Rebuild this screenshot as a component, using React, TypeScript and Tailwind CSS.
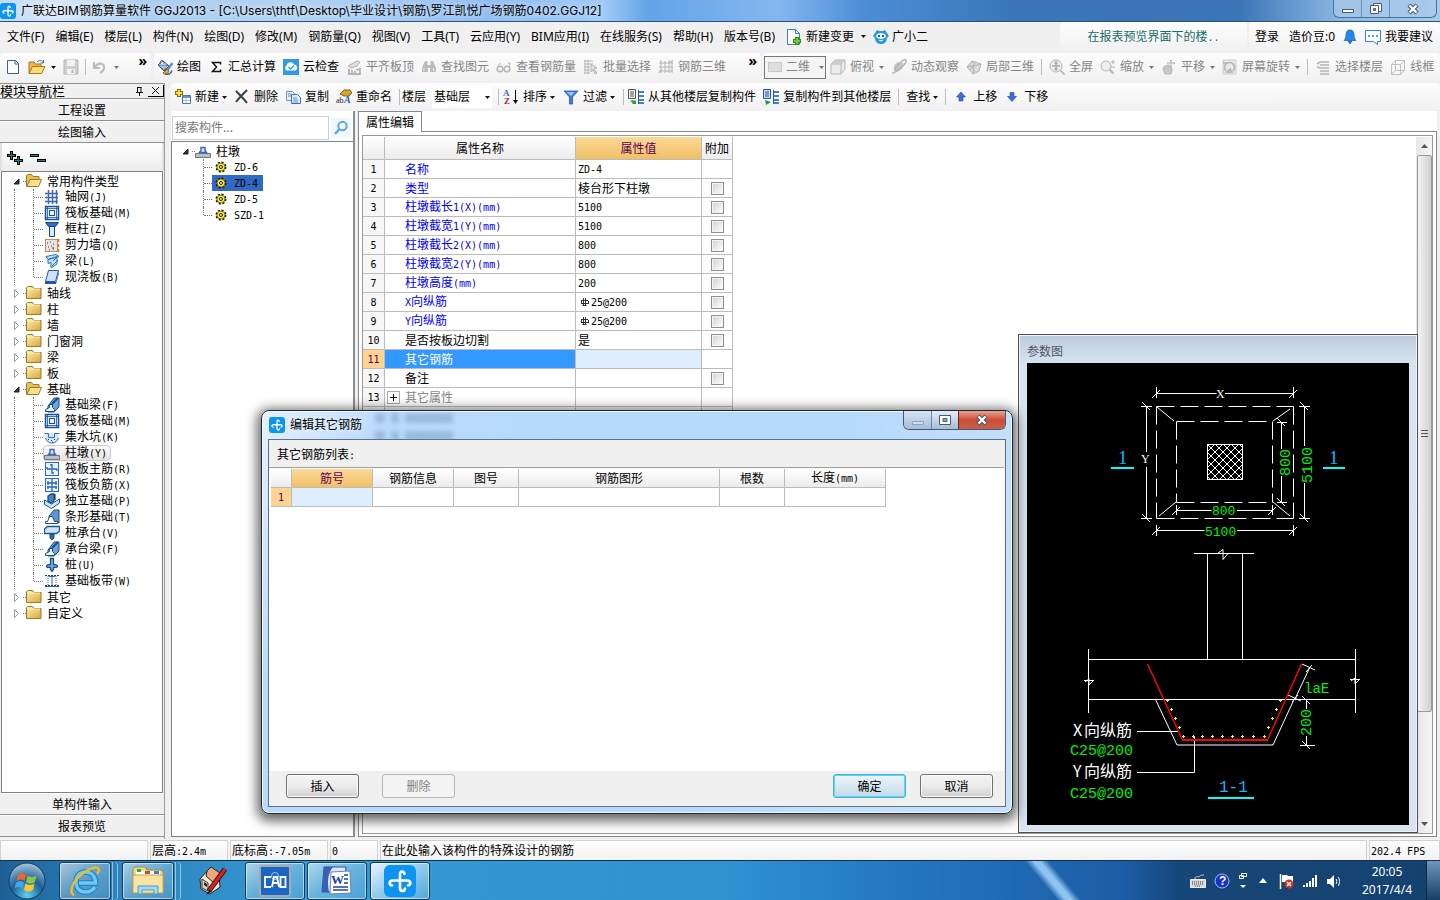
import React, { useState } from "react";

const UI = "[font-family:'Noto_Sans','Noto_Sans_CJK_SC',sans-serif] text-[12px] leading-4";
const SONG = "[font-family:'Noto_Sans_CJK_SC',sans-serif] text-[12px] leading-4";

/* Han characters at 12px with half-width Latin beside them */
function Mix({ children }: { children: string }) {
  return (
    <span className="whitespace-pre">
      {children.split(/([\x20-\x7e]+)/).map((part, i) =>
        i % 2 ? (
          <span key={i} className="text-[10px] [font-family:'DejaVu_Sans_Mono',monospace]">
            {part}
          </span>
        ) : (
          part
        ),
      )}
    </span>
  );
}

function Ico({ children, w = 16, h = 16, vb }: { children: React.ReactNode; w?: number; h?: number; vb?: string }) {
  return (
    <svg width={w} height={h} viewBox={vb ?? `0 0 ${w} ${h}`} fill="none" className="shrink-0" aria-hidden="true">
      {children}
    </svg>
  );
}

function Caret({ color = "#111" }: { color?: string }) {
  return (
    <Ico w={5} h={3}>
      <path d="M0 0h5L2.5 3z" fill={color} />
    </Ico>
  );
}

function Logo({ size }: { size: number }) {
  return (
    <Ico w={size} h={size} vb="0 0 32 32">
      <rect width="32" height="32" rx="6" fill="#0c94f0" />
      <path d="M20.500 9c-.5-3.500-4.500-3.500-4.500.500v13.500c0 4 4.500 4 5 .500M8 20.500c-3.500-1-3-5 1-5h14c4 0 4.500 4 1 5" stroke="#fff" strokeWidth="2.600" strokeLinecap="round" />
    </Ico>
  );
}

const G = "#b4b4b4";

const icons: Record<string, React.ReactNode> = {
  newfile: <Ico><path d="M2.500 1.500h8l3 3v10h-11z" fill="#fff" stroke="#3a5f96" /><path d="M10 1.500v3.500h3.500" stroke="#3a5f96" /></Ico>,
  open: <Ico w={18}><path d="M1 14V3h5l1.500 2H13v3" fill="#e9b74d" stroke="#a97916" /><path d="M1 14.500 4.500 7.500H17l-3.500 7z" fill="#ffdb7a" stroke="#a97916" /><path d="M9 3c2-2.500 5-2 6 .500M15.500 1v3h-3" stroke="#3f74ad" /></Ico>,
  save: <Ico><path d="M1 1h14v14H1z" fill="#cfcfcf" stroke="#b5b5b5" /><path d="M4 1h8v6H4zM4 10h8v5H4z" fill="#f2f2f2" /><path d="M9.500 11v3" stroke="#b5b5b5" strokeWidth="2" /></Ico>,
  undo: <Ico><path d="M2 3v6h6M3 8c3-5 10-4 9 1 0 2-2 4-4 5" stroke="#bcbcbc" strokeWidth="2.200" /></Ico>,
  draw: <Ico><path d="m1 6 5-4 6 5-5 5z" fill="#fff" stroke="#33507c" /><path d="M3 5c0-5 4-5 4 0" stroke="#33507c" /><path d="M1 6h10l-4 5z" fill="#a9c7ee" stroke="#33507c" strokeWidth=".7" /><path d="m15.500 4-5 7" stroke="#5b8bd6" strokeWidth="2.400" /><path d="m10 10-4 4c2 2 5 1 6-2z" fill="#e5a823" stroke="#8b6310" /><path d="M8 15.500c3 .5 6-1 7-4" stroke="#2a66cc" strokeWidth="1.600" /></Ico>,
  sigma: <Ico><path d="M12.500 5.500v-2h-8L8.500 8l-4 4.500h8v-2" stroke="#111" strokeWidth="1.500" /></Ico>,
  cloud: <Ico><rect width="16" height="16" fill="#2f9be6" /><path d="M3.500 11.500a3 3 0 0 1 0-5 4 4 0 0 1 7.500-1 3.200 3.200 0 0 1 1.500 6z" fill="#fff" /><path d="m5.500 8 2 2 3.500-3.500" stroke="#2f9be6" strokeWidth="1.400" /></Ico>,
  align: <Ico><path d="m2 7 9-5 3 1-3 4-6 2z" fill="#ddd" stroke={G} /><path d="M3 15v-5M6 15v-4M9 15v-3M2 15h12v-5l-4 1" stroke={G} strokeWidth="1.800" /></Ico>,
  find: <Ico><path d="M4 2h2.500v3L7 13H1V9l2-5zM9.500 2H12l1 2 2 5v4H9l.5-8zM6 6h4v3H6z" fill="#bcbcbc" /><path d="M3 9v3M12.500 9v3" stroke="#eee" /></Ico>,
  glasses: <Ico><circle cx="4" cy="10" r="2.800" stroke={G} strokeWidth="1.500" /><circle cx="11" cy="10" r="2.800" stroke={G} strokeWidth="1.500" /><path d="M1.500 9 4 4M13 8l1-4h-2" stroke={G} /></Ico>,
  batch: <Ico><path d="M1 2h9M1 5h9M1 8h6M1 11h6M1 14h6M2 1v14M5 1v14" stroke={G} /><path d="m8 5 6 4-3 1 3 4-2 1-2-4-2 2z" fill="#ddd" stroke={G} /></Ico>,
  steel3d: <Ico><path d="M1 4h14M1 12h14M1 8h14M3 1v13M7 2v12M11 1v13M14 2v12M1 14l3-4M11 4l4-3" stroke={G} /></Ico>,
  flat: <Ico w={14} h={12}><rect x=".5" y="1.500" width="13" height="9" fill="#dedede" stroke="#c8c8c8" /></Ico>,
  cube: <Ico><path d="m1 5 4-4h10v9l-4 5H1z" fill="#ececec" stroke={G} /><path d="M1 5h10v10M11 5l4-4" stroke={G} /><path d="M5 1h10l-4 4H1z" fill="#ccc" /></Ico>,
  orbit: <Ico><path d="M3 10C2 5 7 2 12 4c1 5-3 9-7 8z" fill="#c4c4c4" /><path d="M1 14c2 1 14-8 14-12s-6 1-9 5-3 6 1 5" stroke={G} strokeWidth="1.500" /></Ico>,
  local3d: <Ico><path d="m1 8 5-6 9 3-2 7-6 3z" fill="#ddd" stroke={G} /><path d="m6 2 2 5 7-2M8 7l-1 8M3.500 5l6 8M10 3l-6 8M1 8l7-1" stroke={G} /></Ico>,
  full: <Ico><circle cx="7" cy="7" r="6" fill="#eee" stroke={G} /><path d="M7 3v8M3 7h8M5.500 4.500 7 3l1.500 1.500M5.500 9.500 7 11l1.500-1.500M11.500 11.500l4 4" stroke="#a8a8a8" strokeWidth="1.300" /></Ico>,
  zoom: <Ico><circle cx="6" cy="7" r="5" fill="#eee" stroke={G} /><path d="m9.500 10.500 4 4" stroke={G} strokeWidth="2" /><path d="M11 3h4M13 1v4M11 8h4" stroke={G} /></Ico>,
  pan: <Ico><path d="M2 10c0-3 3-3 5-4 2 0 4 2 4 5l-1 4H4z" fill="#c8c8c8" stroke={G} /><path d="M10 1v8M6 4h8M9 2l1-1 1 1M13 3l1 1-1 1" stroke={G} /></Ico>,
  rotate: <Ico><path d="M1 1h13v14H1z" fill="#e8e8e8" stroke="#ccc" /><path d="M4 12a5 5 0 1 1 7 0M8 10l-3 3h5zM1 4h5" stroke={G} strokeWidth="1.600" /></Ico>,
  floors: <Ico><path d="M5 3h9M5 6h9M5 9h9M5 12h9M5 15h9M2 5l3-2M2 8l3 1" stroke={G} strokeWidth="1.600" /></Ico>,
  wire: <Ico><path d="M1.500 5.500h9v10h-9zM5.500 1.500h9v10h-9zM1.500 5.500l4-4M10.500 5.500l4-4M1.500 15.500l4-4M10.500 15.500l4-4" stroke="#c2c2c2" /></Ico>,
  create: <Ico><path d="M4 0v8M0 4h8" stroke="#8a6a00" strokeWidth="4" /><path d="M4 1v6M1 4h6" stroke="#ffe14a" strokeWidth="2" /><path d="M7.500 6.500h8v8h-8z" fill="#fff" stroke="#5275ad" /><path d="M8 7h7v2H8z" fill="#6d95d9" /><path d="M8 11.500h7M11 9v5" stroke="#a9bfe2" /></Ico>,
  remove: <Ico><path d="M2 2c4 4 8 8 11 12M13 1C9 5 6 8 2 13" stroke="#3d3d3d" strokeWidth="2" /></Ico>,
  copy: <Ico><path d="M1.500 2.500h6l2 2v7h-8z" fill="#e3edfb" stroke="#6b93cd" /><path d="M6.500 5.500h6l3 3v6h-9z" fill="#dfeafa" stroke="#426fb5" /><path d="M3 5h3M3 7h3M8 9h4M8 11h5M8 13h5" stroke="#6b93cd" /></Ico>,
  rename: <Ico><path d="m4 5 4-4h6l2 3-3 3H8z" fill="#d7a436" stroke="#8b6310" /><text x="0" y="14" fontSize="8" fontFamily="Liberation Serif, serif" fill="#222">ab</text><text x="8" y="14" fontSize="10" fontWeight="700" fontStyle="italic" fontFamily="Liberation Serif, serif" fill="#2c60c4">A</text></Ico>,
  sort: <Ico><text x="0" y="7" fontSize="9" fontWeight="700" fontFamily="Liberation Serif, serif" fill="#3c66b5">A</text><text x="1" y="15" fontSize="9" fontWeight="700" fontFamily="Liberation Serif, serif" fill="#a03030">Z</text><path d="M12.500 1v13" stroke="#111" /><path d="M10 11h5l-2.500 4z" fill="#111" /></Ico>,
  filter: <Ico><path d="M1 2h14L9.500 8v7h-3V8z" fill="#3f7de0" stroke="#2458b0" strokeWidth=".8" /><path d="M3.500 3h8L8 7z" fill="#9cc4ff" /></Ico>,
  fromFloor: <Ico><path d="M.5.500h7v9h-7z" fill="#f2f2f2" stroke="#555" /><path d="M2 3h4M2 5h4M2 7h4" stroke="#555" /><path d="M10 2h6v2h-6zM10 6h6v2h-6zM10 10h6v2h-6zM10 13h6v2h-6z" fill="#4c7fbd" /><path d="M10.500 1v14" stroke="#2c5a94" /><path d="M2 12c2-1 4-1 5 0l1-1v4H4l1-1z" fill="#1e9c40" /></Ico>,
  toFloor: <Ico><path d="M.5.500h7v9h-7z" fill="#c6dbff" stroke="#2c5a94" /><path d="M2 3h4M2 5h4M2 7h4" stroke="#2c5a94" /><path d="M10 2h6v2h-6zM10 6h6v2h-6zM10 10h6v2h-6zM10 13h6v2h-6z" fill="#4c7fbd" /><path d="M10.500 1v14" stroke="#2c5a94" /><path d="M2 11l6 2-5 3z" fill="#1e9c40" /></Ico>,
  up: <Ico w={10} h={10}><path d="M5 0 .5 5H3v4h4V5h2.500z" fill="#3b6fdc" stroke="#234a9e" strokeWidth=".6" /></Ico>,
  down: <Ico w={10} h={10}><path d="M5 9.500.5 4.500H3v-4h4v4h2.500z" fill="#3b6fdc" stroke="#234a9e" strokeWidth=".6" /></Ico>,
};

const treeIcons: Record<string, React.ReactNode> = {
  gridnet: <Ico><path d="M1 4.500h13M1 8.500h13M1 12.500h13M4.500 1v14M8.500 1v14M12.500 1v14" stroke="#3e66b4" strokeWidth="1.500" /></Ico>,
  raft: <Ico><rect x="1.500" y="1.500" width="13" height="13" fill="#e7f2ff" stroke="#17529a" strokeWidth="1.500" /><rect x="5.500" y="5.500" width="5" height="5" stroke="#17529a" /><path d="M3.500 1v14M12.500 1v14M1 3.500h14M1 12.500h14" stroke="#17529a" strokeWidth=".8" /></Ico>,
  column: <Ico><path d="M1.500 1.500h13l-3 4h-7z" fill="#2f6fc2" stroke="#15438a" /><path d="M5.500 5.500h5v10h-5z" fill="#d9ebff" stroke="#15438a" /></Ico>,
  wall: <Ico><rect x="1.500" y="2.500" width="12" height="12" fill="#e9e4e0" stroke="#c4895c" /><path d="M3 6h1M6 5h1M9 7h1M4 10h1M7 9h1M5 13h1M9 12h1M8 11h2" stroke="#444" /><path d="M14.500 2v3M14.500 7v3M14.500 12v3" stroke="#e07020" strokeWidth="1.500" /></Ico>,
  beam: <Ico><path d="M2 3.500 12 1.500l3 2-11 3zM4 6.500v4l3-1v5.500l6-4V3.500z" fill="#bfe0fb" stroke="#2a75b8" /><path d="m9 8 4-4M8 13l6-6" stroke="#2a75b8" /></Ico>,
  slab: <Ico><path d="M4.500 1.500h10l-3 11h-10z" fill="#cfe2fb" stroke="#2356a5" /><path d="M1 13h11l3-11v2.500L12 15H1z" fill="#2356a5" /></Ico>,
  fbeam: <Ico><path d="M4 15V9l6-8h5v9l-5 5z" fill="#6fa4d8" stroke="#1c4c86" /><path d="M1.500 14.500v-2l4-2V7.500h3v3l2 2v2z" fill="#e9f4ff" stroke="#1c4c86" /><path d="m8 7 6-6" stroke="#1c4c86" strokeWidth="2" /></Ico>,
  pit: <Ico><path d="M1.500 4v5c1 3 3 5 6.500 5s5.500-2 6.500-5V4" fill="#d5e8fb" /><path d="M.5 4.500h4v4h6v-4h5M1.500 9c1 3 3 5 6.500 5s5.500-2 6.500-5" stroke="#2f6fb8" /><path d="M4 10.500h1M7 11.500h1M10 10.500h1M8 13h1" stroke="#174a8a" /></Ico>,
  pier: <Ico><path d="M.5 10.500h15v4H.500z" fill="#b9bfc3" stroke="#70777c" /><path d="M4.500 9.500 6 7.500v-3h4v3l1.500 2z" fill="#d4e4fb" stroke="#3f62c0" strokeWidth="1.400" /></Ico>,
  mainbar: <Ico><rect x="1.500" y="1.500" width="13" height="13" fill="#eaf3ff" stroke="#2966be" /><path d="M8 3v10M3 8h10M6 4h2M8 12h2M3 8v-2M13 8v2" stroke="#2966be" strokeWidth="1.300" /></Ico>,
  negbar: <Ico><rect x="1.500" y="1.500" width="13" height="13" fill="#eaf3ff" stroke="#2966be" /><path d="M8 1v14M3 6h10M3 10h10M4 4v4M12 4v4M4 9v3M12 9v3" stroke="#2966be" strokeWidth="1.300" /></Ico>,
  isolated: <Ico><path d="m.5 7 7 4 8-5v4l-8 5.500-7-4z" fill="#cfe3fa" stroke="#1c4c86" /><path d="M4 8V3l3-2h3v7l-3 2zM11 7V1" fill="#4a84c4" stroke="#1c4c86" strokeWidth="1.300" /></Ico>,
  strip: <Ico><path d="M5 11V7l5-6h5v13z" fill="#5f96cf" stroke="#1c4c86" /><path d="M1.500 14.500v-2h2l2-5h3l2 5h3v2z" fill="#fff" stroke="#1c4c86" /></Ico>,
  pilecap: <Ico><path d="m.5 4 3-2.500h12V6l-3 2.500H.5z" fill="#cfe3fa" stroke="#1c5a96" strokeWidth="1.300" /><path d="M6 9v4l2 2 2-2V9z" fill="#2c6cb0" stroke="#1c4c86" /></Ico>,
  pile: <Ico><path d="M6.500 1.500h3v6c3 0 4 1 4 2s-2 1-4 1v2l-1.500 2-1.500-2v-2c-2 0-4 0-4-1s1-2 4-2z" fill="#7fb0e0" stroke="#17508e" strokeWidth="1.300" /></Ico>,
  band: <Ico><path d="M1 2.500h14M1 12.500h14" stroke="#333" strokeDasharray="2 1" /><path d="M4 3v9M12 3v9" stroke="#2966be" strokeDasharray="1 1" /><path d="M8 3v9M1 13.500h14M5 3.500h6" stroke="#2966be" /></Ico>,
};

const FolderClosed = () => (
  <Ico>
    <path d="M.5 13.500v-11l1-1h5l1.500 2h7v10z" fill="url(#fold)" stroke="#9b7a2a" />
    <path d="M1 4h13" stroke="#fff2b8" />
  </Ico>
);
const FolderOpen = () => (
  <Ico>
    <path d="M.5 13.500v-11l1-1h4l1.500 2h6v3" fill="#e8c052" stroke="#9b7a2a" />
    <path d="m1 13.500 3-7h11.500l-3 7z" fill="#ffe08a" stroke="#9b7a2a" />
  </Ico>
);

function Tool({ icon, label, caret, disabled }: { icon?: string; label: string; caret?: boolean; disabled?: boolean }) {
  return (
    <button className={`flex shrink-0 items-center whitespace-nowrap ${disabled ? "text-[#868686]" : "text-black"}`}>
      {icon && <span className="mr-1 flex w-4 justify-center">{icons[icon]}</span>}
      {label}
      {caret && <span className={disabled ? "ml-[5px]" : "ml-[3px]"}><Caret color={disabled ? "#777" : "#111"} /></span>}
    </button>
  );
}

const Sep = () => <i className="h-4 w-px shrink-0 bg-[#bdbdbd]" />;
const More = () => <b className="mr-1 mb-3 ml-auto text-[14px] leading-4">»</b>;
const strip = "bg-linear-to-b from-[#fdfdfd] to-[#f1f1f1] rounded-sm";

const menus = ["文件(F)", "编辑(E)", "楼层(L)", "构件(N)", "绘图(D)", "修改(M)", "钢筋量(Q)", "视图(V)", "工具(T)", "云应用(Y)", "BIM应用(I)", "在线服务(S)", "帮助(H)", "版本号(B)"];

function TitleBar() {
  return (
    <header className="flex h-[22px] shrink-0 items-center border-b border-[#27527f] bg-[linear-gradient(90deg,#c3daf2_0%,#d8e8f8_4%,#a9ccef_10%,#b4d3f2_20%,#8fbdf0_34%,#a0caf6_42%,#64a3e8_45%,#84b7ef_54%,#4c8dd6_60%,#3b77b8_70%,#3a75b6_86%,#8ab6e2_93%,#a7caea_100%)]">
      <Logo size={16} />
      <h1 className="ml-[5px] whitespace-nowrap text-black [font-family:'Inter','Noto_Sans_CJK_SC',sans-serif] [text-shadow:0_0_6px_#fff]">
        广联达BIM钢筋算量软件 GGJ2013 - [C:\Users\thtf\Desktop\毕业设计\钢筋\罗江凯悦广场钢筋0402.GGJ12]
      </h1>
      <div className="mr-[3px] ml-auto flex h-[18px] self-start overflow-hidden rounded-b-md border border-t-0 border-[#4d7298] bg-[#a9c9e8]/70">
        <button aria-label="最小化" className="flex w-7 items-center justify-center border-r border-[#6b8fb4]"><Ico><path d="M2.500 8.500h11v3h-11z" fill="#fff" stroke="#4a5a6c" /></Ico></button>
        <button aria-label="还原" className="flex w-7 items-center justify-center border-r border-[#6b8fb4]"><Ico><path d="M5.500 2.500h8v8h-8z" fill="#fff" stroke="#4a5a6c" /><path d="M2.500 4.500h8v8h-8z" fill="#fff" stroke="#4a5a6c" /><path d="M5.500 7.500h2v2h-2z" fill="#8bb" stroke="#4a5a6c" /></Ico></button>
        <button aria-label="关闭" className="flex w-[46px] items-center justify-center"><CloseX /></button>
      </div>
    </header>
  );
}

const CloseX = () => (
  <Ico w={14} h={12}>
    <path d="m3 2 8 8M11 2l-8 8" stroke="#4a5a6c" strokeWidth="4.500" />
    <path d="m3.500 2.500 7 7M10.500 2.500l-7 7" stroke="#fff" strokeWidth="2.400" />
  </Ico>
);

function MenuBar() {
  return (
    <nav className="flex h-[31px] shrink-0 items-stretch bg-[#f0f0f0] pb-0.5">
      <div className="flex items-center gap-[11px] pl-[7px]">
        {menus.map((m) => <button key={m} className="whitespace-nowrap">{m}</button>)}
        <button className="flex items-center gap-1 whitespace-nowrap">
          <Ico><path d="M1.500.500h8l4 4v11h-12z" fill="#fff" stroke="#3a82c8" /><path d="M9.500.500v4h4" stroke="#3a82c8" /><path d="M11 8v8M7 12h8" stroke="#2f8f12" strokeWidth="4" /><path d="M11 9v6M8 12h6" stroke="#73cc3c" strokeWidth="2" /></Ico>
          新建变更<span className="ml-[3px]"><Caret /></span>
        </button>
        <button className="-ml-1 flex items-center gap-[3px] whitespace-nowrap">
          <Ico><path d="M2 4 4 1l2 1h4l2-1 2 3 2 3-2 2c0 4-3 6-6 6s-6-2-6-6L0 7z" fill="#2a96dc" /><ellipse cx="8" cy="7" rx="5" ry="3" fill="#e8f6ff" /><circle cx="6" cy="7" r="1" fill="#123" /><circle cx="10" cy="7" r="1" fill="#123" /><path d="M6 11c1 1 3 1 4 0" stroke="#fff" /></Ico>
          广小二
        </button>
      </div>
      <a href="#news" className={`mr-0.5 ml-auto flex w-[187px] items-center justify-center text-[#186c6c] ${strip} ${SONG}`}><Mix>在报表预览界面下的楼..</Mix></a>
      <div className={`flex w-[191px] items-center pl-1.5 whitespace-nowrap ${strip}`}>
        <button>登录</button>
        <button className="ml-2.5">造价豆:0</button>
        <button aria-label="通知" className="mr-2 ml-2"><Ico w={14}><path d="M7 1c-3 0-4 2-4 5 0 3-1 4-2 5.500h12C12 10 11 9 11 6c0-3-1-5-4-5zM5 12h4l-2 3z" fill="#2186ee" stroke="#1b5fae" strokeWidth=".7" /></Ico></button>
        <button className="flex items-center gap-1"><Ico><path d="M.5 1.500h15v11h-3v3l-4-3h-8z" fill="#fff" stroke="#2a86d8" /><path d="M3 7h2M7 7h2M11 7h2" stroke="#2a86d8" strokeWidth="1.400" /></Ico>我要建议</button>
      </div>
    </nav>
  );
}

function ToolBar() {
  return (
    <div className="flex h-[30px] shrink-0 bg-[#f0f0f0] pb-0.5">
      <div className={`flex w-[151px] items-center pl-[5px] ${strip}`}>
        <button aria-label="新建">{icons.newfile}</button>
        <button aria-label="打开" className="ml-[7px] flex items-center gap-[5px]">{icons.open}<Caret /></button>
        <button aria-label="保存" className="mr-1.5 ml-[7px]">{icons.save}</button>
        <Sep />
        <button aria-label="撤销" className="ml-1.5 flex items-center gap-1.5">{icons.undo}<Caret color="#777" /></button>
        <More />
      </div>
      <div className={`ml-[3px] flex w-[607px] items-center gap-[7px] pl-[3px] ${strip}`}>
        <Tool icon="draw" label="绘图" />
        <Tool icon="sigma" label="汇总计算" />
        <Tool icon="cloud" label="云检查" />
        <Tool icon="align" label="平齐板顶" disabled />
        <Tool icon="find" label="查找图元" disabled />
        <Tool icon="glasses" label="查看钢筋量" disabled />
        <Tool icon="batch" label="批量选择" disabled />
        <Tool icon="steel3d" label="钢筋三维" disabled />
        <More />
      </div>
      <div className={`ml-0.5 flex flex-1 items-center gap-[7px] pl-px whitespace-nowrap ${strip}`}>
        <label className="-mr-[3px] flex h-[23px] w-[62px] items-center gap-1 border border-[#777] bg-[#f4f4f4] pl-[3px] text-[#868686]">
          {icons.flat}
          <select aria-label="视图模式" className="w-[29px] appearance-none bg-transparent outline-none"><option>二维</option></select>
          <Caret color="#777" />
        </label>
        <Tool icon="cube" label="俯视" caret disabled />
        <Tool icon="orbit" label="动态观察" disabled />
        <Tool icon="local3d" label="局部三维" disabled />
        <Sep />
        <Tool icon="full" label="全屏" disabled />
        <Tool icon="zoom" label="缩放" caret disabled />
        <Tool icon="pan" label="平移" caret disabled />
        <Tool icon="rotate" label="屏幕旋转" caret disabled />
        <Sep />
        <Tool icon="floors" label="选择楼层" disabled />
        <Tool icon="wire" label="线框" disabled />
      </div>
    </div>
  );
}

type Item = [string, string];
const groups: { name: string; items?: Item[] }[] = [
  { name: "常用构件类型", items: [["gridnet", "轴网(J)"], ["raft", "筏板基础(M)"], ["column", "框柱(Z)"], ["wall", "剪力墙(Q)"], ["beam", "梁(L)"], ["slab", "现浇板(B)"]] },
  { name: "轴线" }, { name: "柱" }, { name: "墙" }, { name: "门窗洞" }, { name: "梁" }, { name: "板" },
  { name: "基础", items: [["fbeam", "基础梁(F)"], ["raft", "筏板基础(M)"], ["pit", "集水坑(K)"], ["pier", "柱墩(Y)"], ["mainbar", "筏板主筋(R)"], ["negbar", "筏板负筋(X)"], ["isolated", "独立基础(P)"], ["strip", "条形基础(T)"], ["pilecap", "桩承台(V)"], ["fbeam", "承台梁(F)"], ["pile", "桩(U)"], ["band", "基础板带(W)"]] },
  { name: "其它" }, { name: "自定义" },
];

const ArrowOpen = () => <Ico w={7} h={7}><path d="M6 1v5H1z" fill="#333" stroke="#222" /></Ico>;
const ArrowShut = () => <Ico w={7} h={9}><path d="M1.500.500 5.500 4.500 1.500 8.500z" fill="#fff" stroke="#9a9a9a" /></Ico>;

function NavPanel() {
  const bar = "h-[22px] shrink-0 border-b border-[#8f8f8f] border-t border-t-white bg-[#f0f0f0] text-center";
  return (
    <aside className={`flex w-[165px] shrink-0 flex-col border-r border-[#999] ${SONG}`}>
      <div className="flex h-4 shrink-0 items-center border-y border-[#8f8f8f]">
        <span className="text-[13px] leading-4">模块导航栏</span>
        <button aria-label="固定" className="mr-1 ml-auto"><Ico w={9} h={10}><path d="M1 6.500h7M4.500 7v3M2.500 1v5.500M2.500 1.500h4M6 1v5.500" stroke="#111" /></Ico></button>
        <button aria-label="关闭" className="flex h-3 w-4 items-center justify-center border-r border-b border-black"><Ico w={9} h={9}><path d="m1 1 7 7M8 1 1 8" stroke="#111" /></Ico></button>
      </div>
      <button className={bar}>工程设置</button>
      <button className={bar}>绘图输入</button>
      <div className="flex h-7 shrink-0 items-center gap-[7px] border-x-2 border-x-[#e0e0e0] bg-linear-to-b from-white to-[#ececec] pt-0.5 pl-[5px]">
        <button aria-label="全部展开"><Ico><path d="M4.500 1v9M0 5.500h9M11.500 6v9M7 10.500h9" stroke="#000" strokeWidth="3" /><path d="M4.500 2v7M1 5.500h7M11.500 7v7M8 10.500h7" stroke="#0e8c80" /></Ico></button>
        <button aria-label="全部折叠"><Ico><path d="M0 5.500h9M7 10.500h9" stroke="#000" strokeWidth="3" /><path d="M1 5.500h7M8 10.500h7" stroke="#0e8c80" /></Ico></button>
      </div>
      <ul className="mx-px flex-1 overflow-hidden border border-[#7d828a] bg-white pt-px">
        {groups.map((g) => (
          <li key={g.name}>
            <div className="flex h-4 items-center pl-[10px]">
              <span className="flex w-2 justify-center">{g.items ? <ArrowOpen /> : <ArrowShut />}</span>
              <i className="ml-[3px] w-[3px] border-t border-dotted border-[#777]" />
              {g.items ? <FolderOpen /> : <FolderClosed />}
              <span className="ml-[5px]">{g.name}</span>
            </div>
            {g.items && (
              <ul>
                {g.items.map(([icon, label], i) => (
                  <li key={label} className="flex h-4 items-center">
                    <i className="h-full w-[13px] border-r border-dotted border-[#777]" />
                    <i className={`w-[19px] self-start border-r border-dotted border-[#777] ${i === g.items!.length - 1 ? "h-1/2" : "h-full"}`} />
                    <i className="w-[9px] border-t border-dotted border-[#777]" />
                    <button className={`flex h-4 items-center gap-[5px] rounded-sm border pr-[3px] ${icon === "pier" ? "border-[#ccc] bg-linear-to-b from-[#fafafa] to-[#e4e4e4]" : "border-transparent"}`}>
                      {treeIcons[icon]}
                      <Mix>{label}</Mix>
                    </button>
                  </li>
                ))}
              </ul>
            )}
          </li>
        ))}
      </ul>
      <button className={bar}>单构件输入</button>
      <button className={bar}>报表预览</button>
      <div className="h-0.5 shrink-0" />
    </aside>
  );
}

function ComponentBar() {
  return (
    <div className={`flex h-7 shrink-0 items-center pl-1 whitespace-nowrap ${strip}`}>
      <Tool icon="create" label="新建" caret />
      <div className="mx-[7px] flex gap-[7px]">
        <Tool icon="remove" label="删除" />
        <Tool icon="copy" label="复制" />
        <Tool icon="rename" label="重命名" />
      </div>
      <Sep />
      <label className="ml-0.5 flex items-center gap-1.5">楼层
        <span className="flex h-[22px] w-[60px] items-center bg-white pl-0.5">
          <select className="w-[51px] appearance-none bg-transparent outline-none"><option>基础层</option></select>
          <Caret />
        </span>
      </label>
      <div className="ml-1.5 flex items-center gap-2">
        <Sep />
        <div className="-ml-1"><Tool icon="sort" label="排序" caret /></div>
        <Tool icon="filter" label="过滤" caret />
        <Sep />
      </div>
      <div className="mx-1 flex gap-[7px] pr-[3px]">
        <Tool icon="fromFloor" label="从其他楼层复制构件" />
        <Tool icon="toFloor" label="复制构件到其他楼层" />
      </div>
      <div className="flex items-center gap-[7px]">
        <Sep />
        <Tool label="查找" caret />
        <Sep />
        <Tool icon="up" label="上移" />
        <Tool icon="down" label="下移" />
      </div>
    </div>
  );
}

const Gear = () => (
  <Ico w={12} h={12}>
    <circle cx="6" cy="6" r="4.300" fill="#ffee00" stroke="#111" strokeWidth="2.400" strokeDasharray="1.900 1.470" />
    <circle cx="6" cy="6" r="4" fill="#ffee00" stroke="#665e00" strokeWidth=".8" />
    <circle cx="6" cy="6" r="1.500" fill="#fff" stroke="#111" />
  </Ico>
);

function ComponentTree() {
  const [selected, setSelected] = useState("ZD-4");
  const rows = ["ZD-6", "ZD-4", "ZD-5", "SZD-1"];
  return (
    <section className={`flex w-[184px] shrink-0 flex-col border-r-2 border-[#8a8f96] bg-[#f7f7f7] ${SONG}`}>
      <div className="flex h-[30px] shrink-0 items-center bg-white pt-1 pl-px">
        <input aria-label="搜索构件" placeholder="搜索构件..." className="h-6 w-[157px] border border-[#c9ced8] bg-white px-0.5 pb-1 text-[12px] outline-none placeholder:text-[#777]" />
        <button aria-label="搜索" className="ml-0.5 flex h-5 w-5 items-center justify-center bg-[#f0f7fd]">
          <Ico><circle cx="9.500" cy="6" r="4.200" stroke="#5aaae2" strokeWidth="2" /><path d="m6.500 9-4.500 5" stroke="#5aaae2" strokeWidth="2.400" /></Ico>
        </button>
      </div>
      <div className="flex-1 border border-r-0 border-[#7d828a] bg-white pt-px">
        <div className="flex h-4 items-center pl-[10px]">
          <ArrowOpen />
          <i className="ml-[3px] w-[3px] border-t border-dotted border-[#777]" />
          {treeIcons.pier}
          <span className="ml-[5px]">柱墩</span>
        </div>
        {rows.map((r, i) => (
          <div key={r} className="flex h-4 items-center">
            <i className={`w-[32px] self-start border-r border-dotted border-[#777] ${i === 3 ? "h-1/2" : "h-full"}`} />
            <i className="w-2 border-t border-dotted border-[#777]" />
            <button onClick={() => setSelected(r)} className={`flex h-4 items-center gap-[7px] pr-[5px] pl-[3px] ${r === selected ? "bg-[#316ac5]" : ""}`}>
              <Gear />
              <Mix>{r}</Mix>
            </button>
          </div>
        ))}
      </div>
    </section>
  );
}

const Rebar = () => (
  <Ico w={10} h={10}>
    <path d="M1 3.500h7M1.500 3.500v3M1 6.500h8M8.500 4v3M3.500 1v8M5.500 1v8M2.500 8.500h4" stroke="#222" strokeWidth=".9" />
  </Ico>
);

type Prop = { name: string; value?: string; check?: boolean; kind?: "blue" | "sel" | "group"; rebar?: boolean };
const props: Prop[] = [
  { name: "名称", value: "ZD-4", kind: "blue" },
  { name: "类型", value: "棱台形下柱墩", kind: "blue", check: true },
  { name: "柱墩截长1(X)(mm)", value: "5100", kind: "blue", check: true },
  { name: "柱墩截宽1(Y)(mm)", value: "5100", kind: "blue", check: true },
  { name: "柱墩截长2(X)(mm)", value: "800", kind: "blue", check: true },
  { name: "柱墩截宽2(Y)(mm)", value: "800", kind: "blue", check: true },
  { name: "柱墩高度(mm)", value: "200", kind: "blue", check: true },
  { name: "X向纵筋", value: "25@200", kind: "blue", check: true, rebar: true },
  { name: "Y向纵筋", value: "25@200", kind: "blue", check: true, rebar: true },
  { name: "是否按板边切割", value: "是", check: true },
  { name: "其它钢筋", kind: "sel" },
  { name: "备注", check: true },
  { name: "其它属性", kind: "group" },
];

const cell = "border-r border-b border-[#bcbcbc] p-0 font-normal";
const head = "bg-linear-to-b from-white to-[#ececec]";
const headHot = "bg-linear-to-b from-[#fad998] to-[#f2c063] text-[#5c0059]";

function PropertyTable() {
  return (
    <table className={`w-[370px] table-fixed border-separate border-spacing-0 self-start ${SONG}`}>
      <colgroup><col className="w-[22px]" /><col className="w-[191px]" /><col className="w-[126px]" /><col className="w-[31px]" /></colgroup>
      <thead>
        <tr className="h-[23px]">
          <th className={`${cell} ${head}`} />
          <th className={`${cell} ${head}`}>属性名称</th>
          <th className={`${cell} ${headHot}`}>属性值</th>
          <th className={`${cell} ${head}`}>附加</th>
        </tr>
      </thead>
      <tbody>
        {props.map((p, i) => {
          const sel = p.kind === "sel";
          return (
            <tr key={i} className="h-[19px]">
              <td className={`${cell} text-center ${sel ? "bg-[#ffd390] text-[#5c0059]" : "bg-[#f7f7f7]"}`}><Mix>{String(i + 1)}</Mix></td>
              <td className={`${cell} ${sel ? "bg-[#3399ff] text-white" : p.kind === "blue" ? "text-[#0000ff]" : p.kind === "group" ? "text-[#888]" : ""}`}>
                <div className="flex h-[18px] items-center">
                  <span className="flex w-5 pl-0.5">
                    {p.kind === "group" && <button aria-label="展开" className="flex h-[13px] w-[13px] items-center justify-center border border-[#aaa]"><Ico w={7} h={7}><path d="M0 3.500h7M3.500 0v7" stroke="#111" /></Ico></button>}
                  </span>
                  <Mix>{p.name}</Mix>
                </div>
              </td>
              <td className={`${cell} pl-0.5 ${sel ? "bg-[#dfeeff]" : ""}`}>
                <span className="flex h-4 items-center gap-px">{p.rebar && <span className="ml-0.5"><Rebar /></span>}{p.value && <Mix>{p.value}</Mix>}</span>
              </td>
              <td className={cell}>
                {p.check && <input type="checkbox" aria-label={`附加 ${p.name}`} className="mx-auto block h-[13px] w-[13px] appearance-none border border-[#8e8f8f] bg-linear-to-br from-[#cfd3d8] to-white shadow-[inset_0_0_0_1px_#f4f4f4]" />}
              </td>
            </tr>
          );
        })}
        <tr className="h-[19px]"><td className={cell} /><td className={cell} /><td className={cell} /><td className={cell} /></tr>
      </tbody>
    </table>
  );
}

function PropertyPanel() {
  return (
    <section className="ml-[3px] flex flex-1 flex-col pr-[3px]">
      <div className="flex h-[21px] shrink-0">
        <button className={`w-16 border border-b-0 border-[#85898f] bg-white ${SONG}`}>属性编辑</button>
        <div className="flex-1 border-b border-[#85898f] bg-white" />
      </div>
      <div className="flex flex-1 border border-t-0 border-[#85898f] bg-white p-[3px] pb-0.5">
        <div className="flex flex-1 justify-between border border-[#999] bg-white pt-px">
          <PropertyTable />
          <div className="flex w-4 flex-col items-center bg-linear-to-r from-[#e6e6e6] to-[#f6f6f6]">
            <button aria-label="向上滚动" className="flex h-[18px] items-center"><Ico w={7} h={4}><path d="M0 4h7L3.500 0z" fill="#555" /></Ico></button>
            <div className="flex h-[557px] w-[15px] items-center justify-center rounded-xs border border-[#999] bg-linear-to-r from-[#f4f4f4] to-[#cfcfcf]">
              <Ico w={7} h={9}><path d="M0 1.500h7M0 4.500h7M0 7.500h7" stroke="#555" /></Ico>
            </div>
            <button aria-label="向下滚动" className="mt-auto flex h-[18px] items-center"><Ico w={7} h={4}><path d="M0 0h7L3.500 4z" fill="#555" /></Ico></button>
          </div>
        </div>
      </div>
    </section>
  );
}

/* Ticks at the ends of dimension lines */
const Tick = ({ x, y }: { x: number; y: number }) => <path d={`M${x - 4} ${y + 4}l8-8`} />;
const TickB = ({ x, y }: { x: number; y: number }) => <path d={`M${x - 4} ${y - 4}l8 8`} />;

function PierDrawing() {
  const mono = "Liberation Mono, monospace";
  const dots: [number, number][] = [[1167, 700], [1171, 709], [1175, 718], [1179, 727], [1183, 736], [1193, 736], [1202, 736], [1212, 736], [1222, 736], [1232, 736], [1242, 736], [1253, 736], [1264, 736], [1268, 727], [1272, 718], [1276, 709], [1280, 700]];
  return (
    <svg viewBox="1027 363 382 462" className="block h-full w-full bg-black" fill="none">
      <defs>
        <pattern id="hatch" width="8" height="8" patternUnits="userSpaceOnUse" x="1207" y="444">
          <path d="M0 0l8 8M8 0l-8 8" stroke="#fff" strokeWidth="1" />
        </pattern>
      </defs>
      <g stroke="#fff" strokeWidth="1">
        <path d="M1156.500 393.500h60M1225 393.500h68.500M1156.500 387v11M1293.500 387v11" />
        <Tick x={1156} y={394} /><Tick x={1293} y={394} />
        <path d="M1146.500 406.500V452M1146.500 467v51.500M1141 406.500h11M1141 518.500h11" />
        <TickB x={1146} y={406} /><TickB x={1146} y={518} />
        <path d="M1156.500 406.500h137M1156.500 518.500h137" strokeDasharray="18 6" />
        <path d="M1156.500 406.500v112M1293.500 406.500v112" strokeDasharray="18 6" />
        <path d="M1176.500 421.500h96M1176.500 502.500h96" strokeDasharray="18 6" />
        <path d="M1176.500 421.500v81M1272.500 421.500v81" strokeDasharray="18 6" />
        <path d="M1157 407l17 14M1290 409l-17 12M1159 516l17-14M1290 516l-17-14" />
        <rect x="1207.500" y="444.500" width="35" height="35" fill="url(#hatch)" />
        <path d="M1281.500 422v27M1281.500 476v26M1277 422.500h10M1277 502.500h10" />
        <TickB x={1281} y={422} /><TickB x={1281} y={502} />
        <path d="M1304.500 406v40M1304.500 483v35.500M1299 406.500h11M1299 518.500h11" />
        <TickB x={1304} y={406} /><TickB x={1304} y={518} />
        <path d="M1176.500 510.500h35M1237 510.500h35.500M1176.500 505v10M1272.500 505v10" />
        <Tick x={1176} y={511} /><Tick x={1272} y={511} />
        <path d="M1156.500 530.500h48M1237 530.500h56.500M1156.500 525v11M1293.500 525v11" />
        <Tick x={1156} y={531} /><Tick x={1293} y={531} />
        <path d="M1194 553.500h60M1218 553l5-3.500v10l5-6M1207.500 554v105M1242.500 554v105" />
        <path d="M1088.500 659.500h267M1088.500 699.500h267M1088.500 649v64M1355.500 649v64" />
        <path d="M1084 680.500h10M1085 682l4-3v6l4-4M1350 679.500h10M1351 681l4-3v6l4-4" />
        <path d="M1155.500 699.500l21.500 45.500h96l21-45.500" />
        <path d="M1302 664l13 6M1288 695l13 6M1295 699l14.500-31M1306 672l6-7M1292 702l6-7" />
        <path d="M1306.500 699v10M1306.500 736v10M1300 745.500h15" />
        <TickB x={1306} y={700} /><TickB x={1306} y={745} />
        <path d="M1137 731.500h41M1137 772.500h57.500V737" />
      </g>
      <path d="M1147.500 664l34.500 75M1268 739l33.500-75" stroke="#f00" strokeWidth="1.500" />
      <path d="M1182 740h86" stroke="#f00" strokeWidth="2" />
      {dots.map(([x, y]) => <path key={`${x}-${y}`} d={`M${x - 1} ${y + 0.5}h3M${x + 0.5} ${y - 1}v3`} stroke="#ff0" />)}
      <path d="M1111 468h23M1323 468h22M1208 798h46" stroke="#0ff" strokeWidth="2" />
      <g fontFamily="Liberation Serif, serif" fill="#fff" fontSize="12">
        <text x="1216" y="398">X</text>
        <text x="1141" y="463">Y</text>
      </g>
      <g fontFamily={mono} fill="#00f000">
        <text x="1205" y="536" fontSize="13">5100</text>
        <text x="1212" y="515" fontSize="13">800</text>
        <text transform="translate(1290 476) rotate(-90)" fontSize="15">800</text>
        <text transform="translate(1312 483) rotate(-90)" fontSize="15">5100</text>
        <text transform="translate(1311 736) rotate(-90)" fontSize="15">200</text>
        <text x="1304" y="693" fontSize="14">laE</text>
        <text x="1070" y="755" fontSize="15">C25@200</text>
        <text x="1070" y="798" fontSize="15">C25@200</text>
      </g>
      <g fontFamily="Liberation Serif, serif" fill="#14b4ff" fontSize="19">
        <text x="1118" y="464">1</text>
        <text x="1329" y="464">1</text>
        <text x="1219" y="792" fontFamily={mono} fontSize="16">1-1</text>
      </g>
      <g fontFamily="Noto Sans CJK SC, sans-serif" fill="#fff" fontSize="16">
        <text x="1073" y="736">X</text><text x="1084" y="736">向纵筋</text>
        <text x="1073" y="777">Y</text><text x="1084" y="777">向纵筋</text>
      </g>
    </svg>
  );
}

function ParamWindow() {
  return (
    <section className="absolute top-[334px] left-[1018px] flex h-[499px] w-[400px] flex-col border border-[#4c5055] bg-linear-to-b from-[#bccbdc] to-[#d8e4f1] to-6% px-2 pb-[7px] shadow-[inset_0_0_0_1px_#eef4fa]">
      <h2 className="flex h-7 shrink-0 items-center pt-1.5 text-[#50565c]">参数图</h2>
      <div className="min-h-0 flex-1"><PierDrawing /></div>
    </section>
  );
}

const columns = ["筋号", "钢筋信息", "图号", "钢筋图形", "根数", "长度(mm)"];

function DialogButton({ label, look = "normal" }: { label: string; look?: "normal" | "off" | "main" }) {
  const style =
    look === "off"
      ? "border-[#b5b8ba] bg-[#f4f4f4] text-[#838383]"
      : look === "main"
        ? "border-[#3cb4e0] bg-linear-to-b from-[#eef5f9] to-[#c2dbe8] shadow-[inset_0_0_0_1px_#5fd4f6]"
        : "border-[#707070] bg-linear-to-b from-[#f3f3f3] via-[#ececec] to-[#d0d0d0] shadow-[inset_0_0_0_1px_#fbfbfb]";
  return <button disabled={look === "off"} className={`h-6 w-[73px] rounded-[3px] border ${style}`}>{label}</button>;
}

function RebarDialog() {
  return (
    <section role="dialog" aria-label="编辑其它钢筋" className="absolute top-[410px] left-[261px] flex h-[404px] w-[752px] flex-col rounded-lg border border-[#1d2530] bg-[linear-gradient(115deg,#e6f1fd_0%,#b9dafc_14%,#b5d8fb_60%,#c2dffb_80%,#c6e1fb_100%)] px-1.5 pb-1.5 shadow-[0_3px_12px_4px_rgba(0,0,0,0.6),inset_0_0_0_1px_#f1f8ff]">
      <div className="relative flex h-7 shrink-0 items-center overflow-hidden pl-px">
        <div aria-hidden="true" className="absolute top-0.5 left-[107px] flex flex-col gap-2 opacity-40 blur-[2px]">
          <div className="flex gap-1.5"><i className="h-2.5 w-2.5 bg-[#6d8db0]" /><i className="h-2.5 w-2 bg-[#6d8db0]" /><i className="h-2.5 w-12 bg-[#6d8db0]" /></div>
          <div className="flex gap-1.5"><i className="h-2.5 w-2.5 bg-[#6d8db0]" /><i className="h-2.5 w-2 bg-[#6d8db0]" /><i className="h-2.5 w-12 bg-[#6d8db0]" /></div>
        </div>
        <Logo size={16} />
        <h2 className="relative ml-[5px] [text-shadow:0_0_6px_#fff]">编辑其它钢筋</h2>
        <div className="ml-auto flex h-[19px] self-start overflow-hidden rounded-b-md border border-t-0 border-[#44586e]">
          <button aria-label="最小化" disabled className="flex w-7 items-center justify-center border-r border-[#6d88a4] bg-linear-to-b from-[#d6e5f4] to-[#a5bdd6]"><Ico><path d="M2.500 9.500h11v3h-11z" fill="#ccdcec" stroke="#90a5ba" /></Ico></button>
          <button aria-label="最大化" className="flex w-[26px] items-center justify-center bg-linear-to-b from-[#e4eef8] to-[#a5bdd6]"><Ico><path d="M2.500 3.500h11v9h-11z" fill="#fff" stroke="#4a5a6c" /><path d="M6 6.500h4v3H6z" fill="#9ab" stroke="#4a5a6c" /></Ico></button>
          <button aria-label="关闭" className="flex w-[47px] items-center justify-center border-l border-[#742018] bg-linear-to-b from-[#e6a294] via-[#cc4a35] to-[#c4604a]"><CloseX /></button>
        </div>
      </div>
      <div className={`flex min-h-0 flex-1 flex-col border border-[#5c7088] bg-[#f0f0f0] ${SONG}`}>
        <h3 className="flex h-[27px] shrink-0 items-center pt-0.5 pl-2"><Mix>其它钢筋列表:</Mix></h3>
        <div className="mr-px flex-1 border-t border-[#a0a0a0] bg-white pt-px pl-0.5">
          <table className="w-[615px] table-fixed border-separate border-spacing-0">
            <colgroup><col className="w-[21px]" /><col className="w-[81px]" /><col className="w-[81px]" /><col className="w-[65px]" /><col className="w-[201px]" /><col className="w-[65px]" /><col className="w-[101px]" /></colgroup>
            <thead>
              <tr className="h-[19px]">
                <th className={`${cell} ${head}`} />
                {columns.map((c, i) => <th key={c} className={`${cell} ${i ? head : headHot}`}><Mix>{c}</Mix></th>)}
              </tr>
            </thead>
            <tbody>
              <tr className="h-[19px]">
                <td className={`${cell} bg-[#ffd390] text-center text-[#5c0059]`}><Mix>1</Mix></td>
                {columns.map((c, i) => <td key={c} className={`${cell} ${i ? "" : "bg-[#dfeeff]"}`} />)}
              </tr>
            </tbody>
          </table>
        </div>
        <div className="flex h-[35px] shrink-0 pt-[3px] pr-3 pl-[17px]">
          <DialogButton label="插入" />
          <div className="ml-[23px]"><DialogButton label="删除" look="off" /></div>
          <div className="ml-auto flex gap-3.5"><DialogButton label="确定" look="main" /><DialogButton label="取消" /></div>
        </div>
      </div>
    </section>
  );
}

function StatusBar() {
  const c = "border border-[#d2d2d2] border-b-0 bg-linear-to-b from-[#fdfdfd] to-[#f2f2f2] pl-px pt-px whitespace-nowrap overflow-hidden shrink-0";
  return (
    <footer className={`flex h-[21px] shrink-0 gap-0.5 bg-[#f4f4f4] pt-px ${SONG}`}>
      <div className={`${c} w-[148px]`} />
      <div className={`${c} w-[78px]`}><Mix>层高:2.4m</Mix></div>
      <div className={`${c} w-[98px]`}><Mix>底标高:-7.05m</Mix></div>
      <div className={`${c} w-12`}><Mix>0</Mix></div>
      <div className={`${c} flex-1`}>在此处输入该构件的特殊设计的钢筋</div>
      <div className={`${c} w-[71px]`}><Mix>202.4 FPS</Mix></div>
    </footer>
  );
}

const task = "flex h-[38px] items-center justify-center rounded-[3px] border border-[#123a5e] shadow-[inset_0_0_0_1px_rgba(255,255,255,0.55)]";
const glass = "bg-linear-to-br from-white/60 via-white/25 to-white/10";

function TaskBar() {
  return (
    <footer className="flex h-10 shrink-0 items-center border-t border-[#14304c] bg-[linear-gradient(50deg,transparent_0_71.800%,#8fc4f0_72.400%_72.800%,transparent_73.400%),linear-gradient(90deg,#1d6096_0%,#2c84bd_8%,#3599d3_22%,#2f93d2_50%,#2478c0_62%,#1d5ca6_78%,#174678_82%,#14426f_100%)] text-white">
      <button aria-label="开始" className="ml-2">
        <Ico w={38} h={38}>
          <circle cx="19" cy="19" r="18" fill="url(#orb)" stroke="#0e3a5e" />
          <path d="M10 13c3-2 5-2 8 0l-1.500 6c-3-2-5-2-8 0z" fill="#f0662a" />
          <path d="M19.500 13.500c3 2 6 2 9 0L27 20c-3 2-6 2-9 0z" fill="#8cc63f" />
          <path d="M8 20.500c3-2 5-2 8 0l-1.500 6c-3-2-5-2-8 0z" fill="#3fa4e8" />
          <path d="M17.500 21.500c3 2 6 2 9 0L25 28c-3 2-6 2-9 0z" fill="#fdc72e" />
        </Ico>
      </button>
      <button aria-label="Internet Explorer" className={`${task} ${glass} ml-[13px] w-[52px]`}>
        <Ico w={32} h={32}>
          <path d="M26 22c-2 3-5 5-9.500 5C10 27 7 22.500 7 17S10.500 7 16.500 7 26.500 11 26.500 18H10" stroke="#1c7fc4" strokeWidth="5.500" />
          <path d="M26 22c-2 3-5 5-9.500 5C10 27 7 22.500 7 17S10.500 7 16.500 7 26.500 11 26.500 18H10" stroke="#6cc8f7" strokeWidth="3.500" />
          <path d="M5 30c-6-2-1-14 8-21S30 1 30 5c0 2-1 3-2 4" stroke="#f3bd22" strokeWidth="2.400" />
        </Ico>
      </button>
      <i className="mx-px h-[38px] w-1.5 rounded-r-sm border-x border-white/50" />
      <button aria-label="资源管理器" className={`${task} ${glass} ml-[3px] w-[52px]`}>
        <Ico w={32} h={32}>
          <path d="M1 28V4l2-2h10l2 3h14l2 2v21z" fill="#f1d684" stroke="#b08c34" />
          <path d="M4 6h24v5H4z" fill="#fff" /><path d="M5 4h4v3H5z" fill="#3aa655" /><path d="M13 6h5v3h-5z" fill="#d04a33" /><path d="M22 6h5v3h-5z" fill="#3b7fd0" />
          <path d="M1 10h30v18H1z" fill="#f8e4a2" stroke="#c9a548" />
          <path d="M6 29v-8h20v8h-4v-4H10v4z" fill="#9fd8f3" stroke="#4b9bc7" />
        </Ico>
      </button>
      <i className="mx-px h-[38px] w-1.5 rounded-r-sm border-x border-white/50" />
      <button aria-label="绘图软件" className="ml-[14px] flex w-[34px] justify-center">
        <Ico w={30} h={32}>
          <path d="M2 14 12 3l9 5 1 14-10 7-9-5z" fill="#f6e9d2" stroke="#222" />
          <path d="m9 6 4-4 9 6-6 10-8-7z" fill="#f0a878" stroke="#222" />
          <path d="M4 14l6 4v8l-6-3z" fill="#dcd3c0" stroke="#333" /><path d="M6 17l3 2v3l-3-2z" fill="#222" />
          <path d="M27 4 11 26" stroke="#111" strokeWidth="5" /><path d="M27 4 11 26" stroke="#dd1f1f" strokeWidth="3.400" /><path d="m12 24-4 6 5-3z" fill="#111" />
        </Ico>
      </button>
      <button aria-label="CAD" className={`${task} ${glass} ml-[15px] w-[60px]`}>
        <Ico w={32} h={32}>
          <rect x="1" y="1" width="30" height="30" rx="2" fill="#1a66c4" stroke="#a9a9a9" strokeWidth="2" />
          <circle cx="16" cy="11" r="3.500" stroke="#9fc6f2" />
          <path d="M12 12H6v10h6M13 22l2-10h3l2 10M14 18h5M21.500 12v10h5V12z" stroke="#fff" strokeWidth="1.800" />
        </Ico>
      </button>
      <button aria-label="Word" className={`${task} ${glass} ml-0.5 w-[60px]`}>
        <Ico w={32} h={32}>
          <path d="M1 27 3 2h22l-2 25z" fill="#dde7f8" stroke="#2c4f9c" /><path d="M1 27 3 2h9C7 8 6 16 8 27z" fill="#3560b4" />
          <path d="m10 7 19-1 1 22-21 1z" fill="#fff" stroke="#6b84b4" />
          <text x="10" y="19" fontSize="13" fontWeight="700" fontFamily="Liberation Serif, serif" fill="#21439c">W</text>
          <path d="M23 10h4M23 14h4M23 18h4M12 22h15M12 25h15" stroke="#21439c" strokeWidth="1.600" />
        </Ico>
      </button>
      <button aria-label="GGJ2013" className={`${task} ml-[3px] w-[60px] bg-linear-to-br from-white/90 via-[#a8d8f2]/80 to-[#5fb2e0]/60`}><Logo size={32} /></button>
      <div className="ml-auto flex items-center gap-2">
        <Ico><path d="M.5 6.500h15v8H.500z" fill="#d9d9d9" stroke="#eee" /><path d="M2 9h12M2 11h12M5 13h6" stroke="#444" strokeDasharray="1 1" /><path d="M5 6c0-4 3-1 5-3 1-1 2-1 4-1" stroke="#ccc" /></Ico>
        <Ico><circle cx="8" cy="8" r="7" fill="#1434c8" stroke="#a8bdf0" /><text x="5" y="12" fontSize="12" fontWeight="700" fontFamily="Liberation Sans, sans-serif" fill="#fff">?</text></Ico>
        <Ico w={10} h={18}><path d="M3.500 1.500h5v3h-5zM1.500 3.500h4v3h-4z" stroke="#fff" /><path d="M2 13h6l-3 3z" fill="#fff" /></Ico>
        <button aria-label="显示隐藏的图标" className="mx-[3px]"><Ico w={8} h={5}><path d="M0 5h8L4 0z" fill="#fff" /></Ico></button>
        <Ico><path d="M2.500 1v15" stroke="#fff" strokeWidth="1.500" /><path d="M4 2h5l1 1h5v7h-5L9 9H4z" fill="#fff" /><circle cx="11" cy="11" r="4.500" fill="#d92b1c" /><path d="m9 9 4 4M13 9l-4 4" stroke="#fff" strokeWidth="1.500" /></Ico>
        <Ico><path d="M2 12v2M5 10v4M8 8v6M11 5v9M14 2v12" stroke="#fff" strokeWidth="2" /></Ico>
        <Ico><path d="M1 6h3l4-4v13l-4-4H1z" fill="#fff" /><path d="M10 6c1 1 1 4 0 5M12 4c2 2 2 7 0 9" stroke="#fff" /></Ico>
      </div>
      <time className="ml-1.5 w-[78px] text-center leading-[18px]">20:05<br />2017/4/4</time>
      <button aria-label="显示桌面" className="h-full w-[14px] border-l border-[#0c2a48] bg-linear-to-b from-[#6f97bd] to-[#173f68]" />
    </footer>
  );
}

export default function App() {
  return (
    <div className={`relative flex h-screen flex-col overflow-hidden bg-[#f0f0f0] text-black ${UI}`}>
      <svg width="0" height="0" className="absolute" aria-hidden="true">
        <linearGradient id="fold" x1="0" y1="0" x2="1" y2="1"><stop stopColor="#fff1ae" /><stop offset="1" stopColor="#dba53a" /></linearGradient>
        <radialGradient id="orb" cx=".5" cy=".9" r=".9"><stop stopColor="#5fd0f0" /><stop offset=".5" stopColor="#1d5f94" /><stop offset="1" stopColor="#a9c6dc" /></radialGradient>
      </svg>
      <TitleBar />
      <MenuBar />
      <ToolBar />
      <main className="flex min-h-0 flex-1 gap-1.5">
        <NavPanel />
        <div className="flex min-w-0 flex-1 flex-col">
          <ComponentBar />
          <div className="flex min-h-0 flex-1 pb-0.5">
            <ComponentTree />
            <PropertyPanel />
          </div>
        </div>
      </main>
      <StatusBar />
      <TaskBar />
      <ParamWindow />
      <RebarDialog />
    </div>
  );
}
